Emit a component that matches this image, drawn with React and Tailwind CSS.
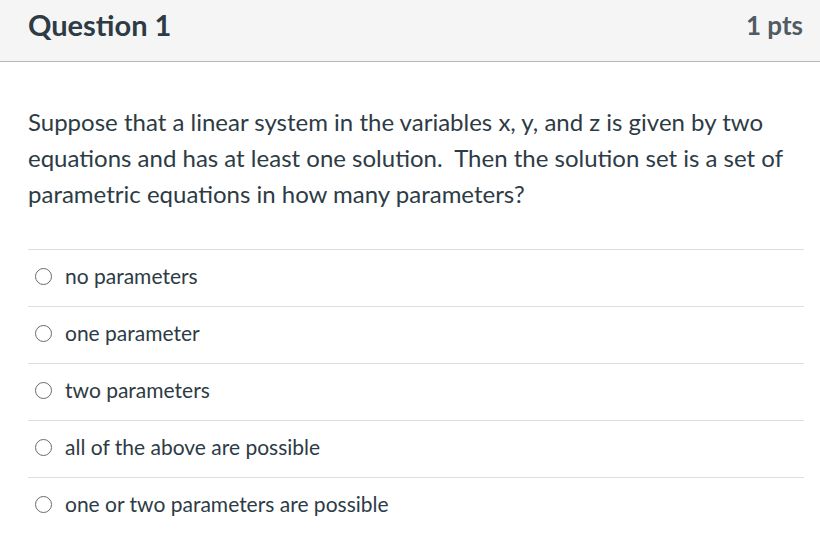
const OPTIONS = [
  "no parameters",
  "one parameter",
  "two parameters",
  "all of the above are possible",
  "one or two parameters are possible",
];

// ── Radio ─────────────────────────────────────────────────────────────────────

const Radio = () => (
  <span className="w-[17px] h-[17px] mt-[6px] rounded-full border-[1.5px] border-[#666b70] bg-white shrink-0" />
);

// ── App ───────────────────────────────────────────────────────────────────────

export default function App() {
  return (
    <div className="w-[820px] h-[533px] bg-white overflow-hidden text-[#2d3b45]" style={{ fontFamily: "Lato, 'Noto Sans', sans-serif" }}>
      <div className="h-[62px] bg-[#f5f5f5] border-b border-[#b4b8bb] flex items-start justify-between pl-[28px] pr-[17px] pt-[9px]">
        <h2 className="text-[29px] font-bold leading-[32px]">Question 1</h2>
        <div className="text-[26px] font-bold leading-[32px] text-[#505b63]">1 pts</div>
      </div>

      <div className="px-[28px] pr-[16px]">
        <p className="text-[24px] leading-[36px] mt-[42px] mb-[37px]">
          Suppose that a linear system in the variables x, y, and z is given by two
          equations and has at least one solution.&nbsp; Then the solution set is a set of
          parametric equations in how many parameters?
        </p>

        <div className="flex flex-col">
          {OPTIONS.map((label) => (
            <div key={label} className="h-[57px] border-t border-[#dcdfe2] flex items-start gap-[13px] pl-[7px] pt-[12px]">
              <Radio />
              <span className="text-[21px] leading-[28px]">{label}</span>
            </div>
          ))}
        </div>
      </div>
    </div>
  );
}
